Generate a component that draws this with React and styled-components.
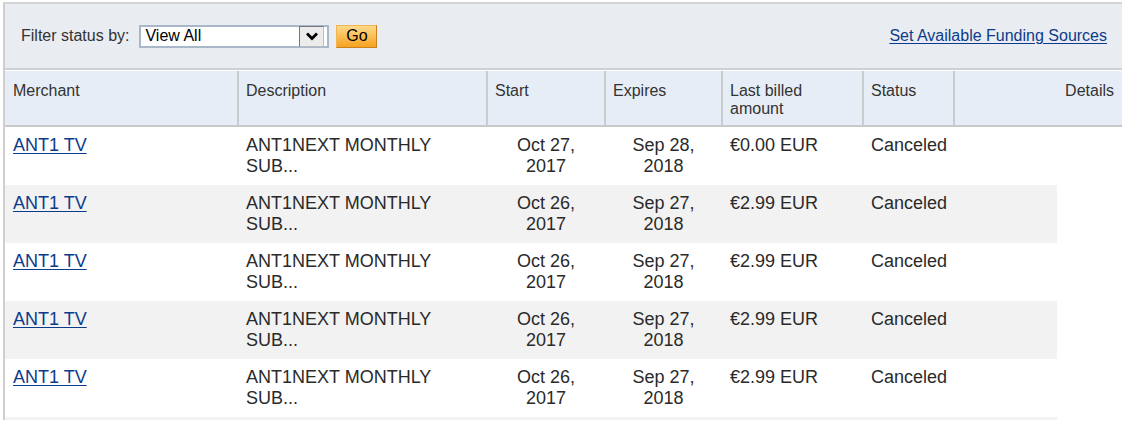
import React from 'react';
import styled, { createGlobalStyle } from 'styled-components';

const GlobalStyle = createGlobalStyle`
	html, body {
		margin: 0;
		padding: 0;
		background: #fff;
	}
	body {
		font-family: "Liberation Sans", Arial, sans-serif;
		color: #333;
	}
`;

const rows = [
	{ merchant: 'ANT1 TV', start: ['Oct 27,', '2017'], expires: ['Sep 28,', '2018'], amount: '€0.00 EUR', status: 'Canceled' },
	{ merchant: 'ANT1 TV', start: ['Oct 26,', '2017'], expires: ['Sep 27,', '2018'], amount: '€2.99 EUR', status: 'Canceled' },
	{ merchant: 'ANT1 TV', start: ['Oct 26,', '2017'], expires: ['Sep 27,', '2018'], amount: '€2.99 EUR', status: 'Canceled' },
	{ merchant: 'ANT1 TV', start: ['Oct 26,', '2017'], expires: ['Sep 27,', '2018'], amount: '€2.99 EUR', status: 'Canceled' },
	{ merchant: 'ANT1 TV', start: ['Oct 26,', '2017'], expires: ['Sep 27,', '2018'], amount: '€2.99 EUR', status: 'Canceled' },
];

export default function App() {
	return (
		<>
			<GlobalStyle />
			<Panel>
				<FilterBar>
					<FilterGroup>
						<FilterLabel>Filter status by:</FilterLabel>
						<SelectBox>
							<SelectValue>View All</SelectValue>
							<ArrowBox>
								<svg width="14" height="10" viewBox="0 0 14 10">
									<path d="M2 2.5 L7 7.5 L12 2.5" fill="none" stroke="#000" strokeWidth="2.8" />
								</svg>
							</ArrowBox>
						</SelectBox>
						<GoButton>Go</GoButton>
					</FilterGroup>
					<TopLink href="#">Set Available Funding Sources</TopLink>
				</FilterBar>

				<HeaderRow>
					<HeadCell first>Merchant</HeadCell>
					<HeadCell>Description</HeadCell>
					<HeadCell>Start</HeadCell>
					<HeadCell>Expires</HeadCell>
					<HeadCell>Last billed<br />amount</HeadCell>
					<HeadCell>Status</HeadCell>
					<HeadCell align="right">Details</HeadCell>
				</HeaderRow>

				<Body>
					{rows.map((r, i) => (
						<Row key={i} striped={i % 2 === 1}>
							<Cell><Link href="#">{r.merchant}</Link></Cell>
							<Cell indent>ANT1NEXT MONTHLY<br />SUB...</Cell>
							<Cell align="center">{r.start[0]}<br />{r.start[1]}</Cell>
							<Cell align="center">{r.expires[0]}<br />{r.expires[1]}</Cell>
							<Cell indent>{r.amount}</Cell>
							<Cell indent>{r.status}</Cell>
							<Cell />
						</Row>
					))}
					<Row striped />
				</Body>
			</Panel>
		</>
	);
}

const columns = '232px 249px 118px 117px 141px 91px';

const Panel = styled.div`
	margin: 2px 0 0 3px;
	border-top: 2px solid #d4d4d4;
	border-left: 2px solid #cfcfcf;
	height: 416px;
	overflow: hidden;
`;

const FilterBar = styled.div`
	display: flex;
	justify-content: space-between;
	align-items: center;
	height: 64px;
	padding: 0 15px 0 16px;
	background: #e9ecf0;
	border-bottom: 2px solid #cdd0d4;
	box-shadow: 0 1px 0 #fff;
	margin-bottom: 1px;
`;

const FilterGroup = styled.div`
	display: flex;
	align-items: center;
	gap: 8px;
`;

const FilterLabel = styled.span`
	margin-right: 2px;
	font-size: 16px;
	color: #333;
`;

const SelectBox = styled.div`
	display: flex;
	align-items: center;
	justify-content: space-between;
	box-sizing: border-box;
	width: 190px;
	height: 23px;
	padding: 0 3px 0 4px;
	background: #fff;
	border: 2px solid #a9b7cb;
`;

const SelectValue = styled.span`
	font-size: 16px;
	color: #000;
`;

const ArrowBox = styled.span`
	display: flex;
	align-items: center;
	justify-content: center;
	box-sizing: border-box;
	width: 25px;
	height: 21px;
	background: #ececec;
	border: 1px solid #777;
	border-right-color: #bdbdbd;
	border-bottom-color: #bdbdbd;
`;

const GoButton = styled.button`
	box-sizing: border-box;
	width: 41px;
	height: 23px;
	margin-left: -1px;
	padding: 0;
	font-family: "Liberation Sans", Arial, sans-serif;
	font-size: 16px;
	color: #000;
	background: linear-gradient(#ffd98a, #f6a31f);
	border: 1px solid #f0b451;
	border-right-color: #c8821e;
	border-bottom-color: #c8821e;
`;

const Link = styled.a`
	color: #0c3b8c;
	text-decoration: underline;
	text-underline-offset: 2px;
`;

const TopLink = styled(Link)`
	font-size: 16px;
`;

const HeaderRow = styled.div`
	display: grid;
	grid-template-columns: ${columns} 1fr;
	background: #e6edf6;
	border-bottom: 2px solid #c8c9cb;
`;

const HeadCell = styled.div`
	box-sizing: border-box;
	height: 54px;
	padding: 11px 8px 0 ${(p) => (p.first ? '8px' : '7px')};
	border-left: ${(p) => (p.first ? 'none' : '2px solid #cacbcd')};
	font-size: 16px;
	line-height: 18px;
	color: #333;
	text-align: ${(p) => p.align || 'left'};
`;

const Body = styled.div`
	width: 1052px;
`;

const Row = styled.div`
	display: grid;
	grid-template-columns: ${columns} 1fr;
	min-height: 58px;
	background: ${(p) => (p.striped ? '#f2f2f2' : '#fff')};
`;

const Cell = styled.div`
	box-sizing: border-box;
	padding: 8px 6px 8px ${(p) => (p.indent ? '9px' : '8px')};
	font-size: 18px;
	line-height: 21px;
	color: #2a2a2a;
	text-align: ${(p) => p.align || 'left'};
`;
